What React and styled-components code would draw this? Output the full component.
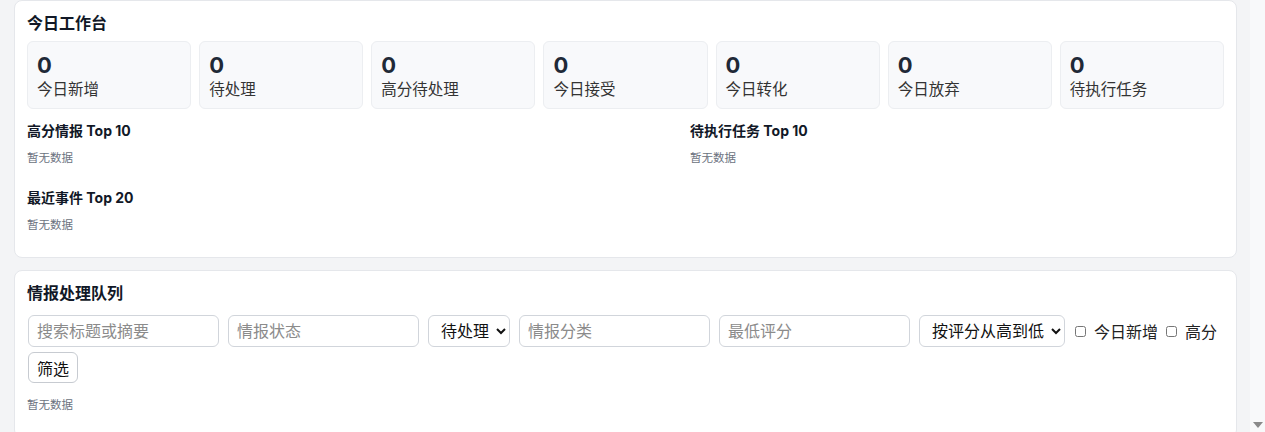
import React from "react"
import styled, { createGlobalStyle } from "styled-components"

const GlobalStyle = createGlobalStyle`
  html, body {
    margin: 0;
    padding: 0;
    background: #f3f4f6;
    font-family: Inter, "Noto Sans CJK SC", sans-serif;
    color: #1f2937;
  }
  * { box-sizing: border-box; }
`

const Screen = styled.div`
  display: flex;
  height: 432px;
  overflow: hidden;
`

const Main = styled.main`
  flex: 1;
  padding: 0 13px 0 14px;
  overflow: hidden;
`

const ScrollTrack = styled.div`
  width: 15px;
  background: #f8f9fa;
  display: flex;
  flex-direction: column;
  justify-content: flex-end;
  align-items: center;
  padding-bottom: 4px;
`

const Arrow = styled.div`
  width: 0;
  height: 0;
  border-left: 5px solid transparent;
  border-right: 5px solid transparent;
  border-top: 6px solid #8a8a8a;
`

const Card = styled.section`
  background: #fff;
  border: 1px solid #e5e7eb;
  border-radius: 8px;
  padding: 11px 12px 24px;
  margin-bottom: 12px;
`

const CardTitle = styled.h2`
  margin: 0 0 7px;
  font-size: 16px;
  line-height: 22px;
  font-weight: 700;
  color: #111827;
`

const StatGrid = styled.div`
  display: grid;
  grid-template-columns: repeat(7, 1fr);
  gap: 8px;
  margin-bottom: 12px;
`

const StatBox = styled.div`
  background: #f8f9fb;
  border: 1px solid #eceef1;
  border-radius: 6px;
  padding: 9px 9px 7px;
`

const StatNum = styled.div`
  font-size: 22px;
  line-height: 28px;
  font-weight: 700;
  color: #1f2937;
`

const StatLabel = styled.div`
  font-size: 15.5px;
  line-height: 22px;
  color: #333;
`

const Sections = styled.div`
  display: grid;
  grid-template-columns: 651px 1fr;
  column-gap: 12px;
  row-gap: 22px;
`

const Section = styled.div``

const SectionTitle = styled.h3`
  margin: 0 0 9px;
  font-size: 14px;
  line-height: 20px;
  font-weight: 700;
  color: #111827;
`

const Empty = styled.div`
  font-size: 11.5px;
  line-height: 16px;
  color: #6b7280;
`

const Filters = styled.div`
  display: flex;
  flex-wrap: wrap;
  align-items: center;
  column-gap: 9px;
  row-gap: 5px;
  margin: 11px 0 14px 1px;
`

const Input = styled.input`
  width: 191px;
  height: 32px;
  padding: 0 8px;
  border: 1px solid #d1d5db;
  border-radius: 6px;
  font-family: inherit;
  font-size: 16px;
  color: #1f2937;
  background: #fff;
  &::placeholder { color: #8b8b8b; }
`

const Select = styled.select`
  height: 32px;
  padding: 0 3px 0 8px;
  border: 1px solid #d1d5db;
  border-radius: 6px;
  font-family: inherit;
  font-size: 16px;
  color: #111;
  background: #fff;
`

const Check = styled.label`
  display: inline-flex;
  align-items: center;
  gap: 8px;
  font-size: 16px;
  color: #222;
  margin-right: -2px;
  input { margin: 0 0 0 1px; width: 11px; height: 11px; }
`

const Button = styled.button`
  height: 31px;
  padding: 0 8px;
  border: 1px solid #c7cbd1;
  border-radius: 6px;
  background: #fff;
  font-family: inherit;
  font-size: 16px;
  color: #111;
`

const stats = ["今日新增", "待处理", "高分待处理", "今日接受", "今日转化", "今日放弃", "待执行任务"]
const lists = ["高分情报 Top 10", "待执行任务 Top 10", "最近事件 Top 20"]

export default function App() {
  return (
    <>
      <GlobalStyle />
      <Screen>
        <Main>
          <Card>
            <CardTitle>今日工作台</CardTitle>
            <StatGrid>
              {stats.map(s => (
                <StatBox key={s}>
                  <StatNum>0</StatNum>
                  <StatLabel>{s}</StatLabel>
                </StatBox>
              ))}
            </StatGrid>
            <Sections>
              {lists.map(l => (
                <Section key={l}>
                  <SectionTitle>{l}</SectionTitle>
                  <Empty>暂无数据</Empty>
                </Section>
              ))}
            </Sections>
          </Card>
          <Card>
            <CardTitle>情报处理队列</CardTitle>
            <Filters>
              <Input placeholder="搜索标题或摘要" />
              <Input placeholder="情报状态" />
              <Select defaultValue="pending">
                <option value="pending">待处理</option>
              </Select>
              <Input placeholder="情报分类" />
              <Input placeholder="最低评分" />
              <Select defaultValue="score">
                <option value="score">按评分从高到低</option>
              </Select>
              <Check><input type="checkbox" />今日新增</Check>
              <Check><input type="checkbox" />高分</Check>
              <Button>筛选</Button>
            </Filters>
            <Empty>暂无数据</Empty>
          </Card>
        </Main>
        <ScrollTrack>
          <Arrow />
        </ScrollTrack>
      </Screen>
    </>
  )
}
